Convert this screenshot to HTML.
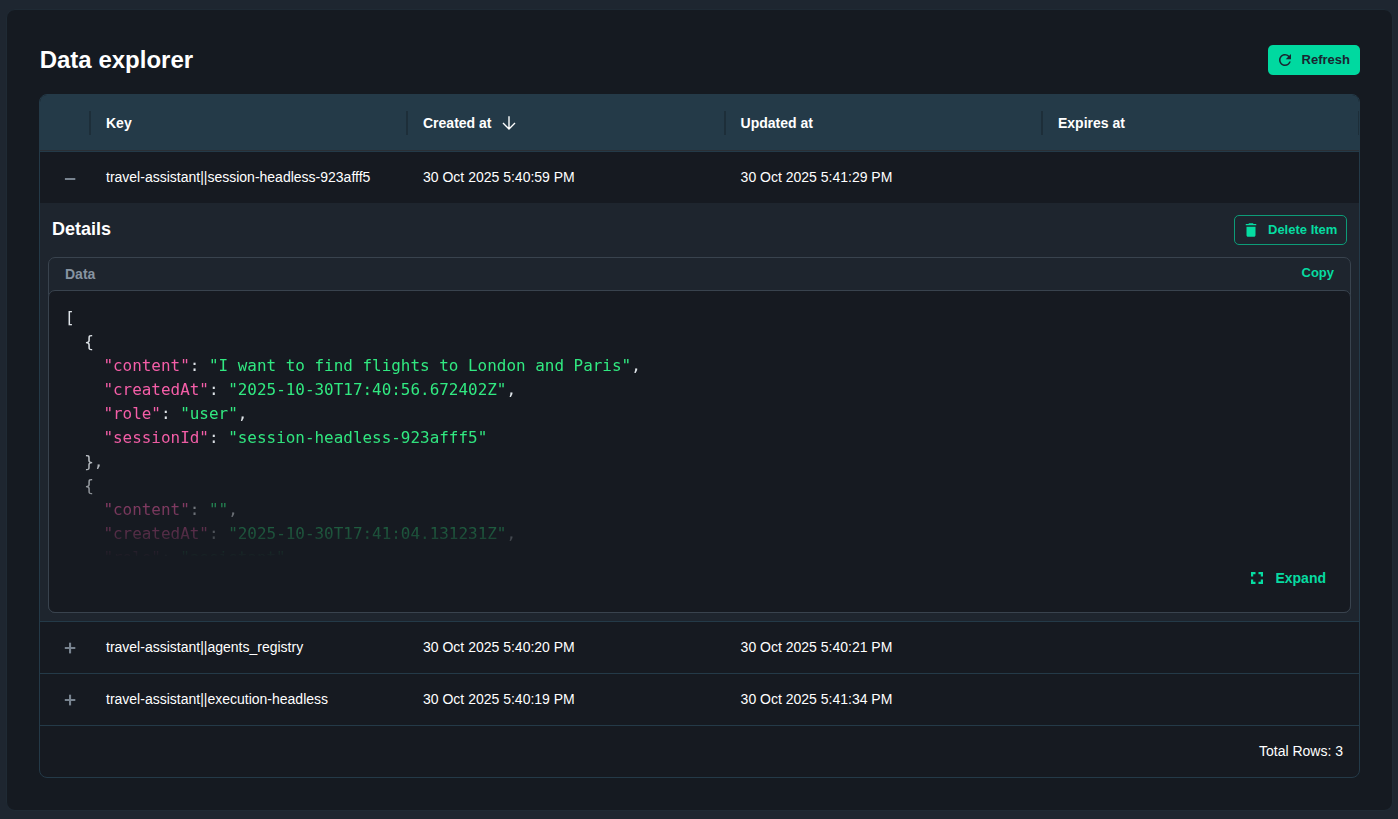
<!DOCTYPE html>
<html><head><meta charset="utf-8">
<style>
*{box-sizing:border-box;margin:0;padding:0}
html,body{width:1398px;height:819px;overflow:hidden;background:#1e2630;font-family:"Liberation Sans",Arial,sans-serif;color:#fff}
.panel{position:absolute;left:6px;top:9px;width:1387px;height:802px;background:#151a21;border:1px solid #1f2a34;border-radius:9px}
h1{position:absolute;left:39.7px;top:45px;font-size:24px;line-height:30px;font-weight:700;color:#fff;letter-spacing:0}
.refresh{position:absolute;left:1268px;top:45px;width:92px;height:30px;border-radius:5px;background:#00d9a0;color:#1a2530;font-weight:700;font-size:13px;line-height:30px}
.refresh svg{position:absolute;left:8px;top:6px}
.refresh span{position:absolute;left:33.6px;top:0}
.table{position:absolute;left:39px;top:94px;width:1321px;height:684px;border:1px solid #243a48;border-radius:8px;overflow:hidden;background:#161a21}
.thead{position:absolute;left:0;top:0;width:100%;height:55px;background:#243a48}
.hline{position:absolute;left:0;width:100%;height:1px;background:#243a48}
.sep{position:absolute;top:16px;width:2px;height:24px;background:#1d2e39}
.th{position:absolute;top:0;line-height:56px;font-size:14px;font-weight:700;color:#fff}
.row{position:absolute;left:0;width:100%;height:52px}
.td{position:absolute;top:-1px;line-height:52px;font-size:14px;color:#fff}
.ico{position:absolute;left:24px;top:20px}
.details{position:absolute;left:0;top:108px;width:100%;height:419px;background:#1e252e}
.details h2{position:absolute;left:12px;top:15px;font-size:18px;line-height:22px;font-weight:700}
.del{position:absolute;left:1194px;top:12px;width:113px;height:30px;border:1px solid #0d9c78;border-radius:5px;color:#06dca1;font-weight:700;font-size:13px;line-height:28px}
.del svg{position:absolute;left:6.8px;top:4.6px}
.del span{position:absolute;left:33px;top:0}
.data{position:absolute;left:8px;top:54px;width:1303px;height:356px;border:1px solid #39434e;border-radius:7px;background:#1e252e}
.data .lbl{position:absolute;left:16px;top:7px;font-size:14px;line-height:18px;font-weight:700;color:#8794a1}
.data .copy{position:absolute;right:16px;top:6px;font-size:13px;line-height:18px;font-weight:700;color:#06dca1}
.code{position:absolute;left:-1px;top:32px;width:1303px;height:323px;border:1px solid #39434e;border-radius:7px;background:#161a21;overflow:hidden}
pre{position:absolute;left:16px;top:15px;height:250px;width:1260px;overflow:hidden;font-family:"DejaVu Sans Mono","Liberation Mono",monospace;font-size:15.95px;line-height:24px;color:#dfe4e9;-webkit-mask-image:linear-gradient(to bottom,#000 0,#000 130px,rgba(0,0,0,.27) 228px,transparent 252px);mask-image:linear-gradient(to bottom,#000 0,#000 130px,rgba(0,0,0,.27) 228px,transparent 252px)}
.k{color:#f55ea8}.s{color:#31e981}
.expand{position:absolute;right:24px;top:277px;font-size:14px;line-height:20px;font-weight:700;color:#06dca1}
.expand svg{position:absolute;left:-25.1px;top:5px}
.foot{position:absolute;right:16px;top:630px;line-height:52px;font-size:14px;color:#fff}
</style></head><body>
<div class="panel"></div>
<h1>Data explorer</h1>
<div class="refresh"><svg width="18" height="18" viewBox="0 0 24 24" fill="#1a2530"><path d="M17.65 6.35A7.958 7.958 0 0 0 12 4c-4.42 0-7.99 3.58-7.99 8s3.57 8 7.99 8c3.73 0 6.84-2.55 7.73-6h-2.08A5.99 5.99 0 0 1 12 18c-3.31 0-6-2.69-6-6s2.69-6 6-6c1.66 0 3.14.69 4.22 1.78L13 11h7V4l-2.35 2.35z"/></svg><span>Refresh</span></div>
<div class="table">
 <div class="thead">
  <div class="sep" style="left:49px"></div><div class="th" style="left:66px">Key</div>
  <div class="sep" style="left:366px"></div><div class="th" style="left:383px">Created at</div>
  <svg style="position:absolute;left:461px;top:19.7px" width="16" height="16" viewBox="0 0 16 16" fill="none" stroke="#fff" stroke-width="1.4"><path d="M8 1.3v12.7M2 8l6 6 6-6"/></svg>
  <div class="sep" style="left:684px"></div><div class="th" style="left:700.6px">Updated at</div>
  <div class="sep" style="left:1001px"></div><div class="th" style="left:1018px">Expires at</div>
  <div class="sep" style="left:1318px;width:1px"></div>
 </div>
 <div class="hline" style="top:55px;background:#2a2f35"></div><div class="hline" style="top:56px"></div>
 <div class="row" style="top:57px">
  <svg class="ico" width="12" height="12" viewBox="0 0 12 12" fill="#78838f"><rect x="0.9" y="6" width="10.4" height="2"/></svg>
  <div class="td" style="left:66px">travel-assistant||session-headless-923afff5</div>
  <div class="td" style="left:383px">30 Oct 2025 5:40:59 PM</div>
  <div class="td" style="left:700.6px">30 Oct 2025 5:41:29 PM</div>
 </div>
 <div class="details">
  <h2>Details</h2>
  <div class="del"><svg width="18" height="18" viewBox="0 0 24 24" fill="#06dca1"><path d="M6 19c0 1.1.9 2 2 2h8c1.1 0 2-.9 2-2V7.5H6V19zM19 4h-3.5l-1-1h-5l-1 1H5v1.8h14V4z"/></svg><span>Delete Item</span></div>
  <div class="data">
   <div class="lbl">Data</div><div class="copy">Copy</div>
   <div class="code">
<pre>[
  {
    <span class="k">"content"</span>: <span class="s">"I want to find flights to London and Paris"</span>,
    <span class="k">"createdAt"</span>: <span class="s">"2025-10-30T17:40:56.672402Z"</span>,
    <span class="k">"role"</span>: <span class="s">"user"</span>,
    <span class="k">"sessionId"</span>: <span class="s">"session-headless-923afff5"</span>
  },
  {
    <span class="k">"content"</span>: <span class="s">""</span>,
    <span class="k">"createdAt"</span>: <span class="s">"2025-10-30T17:41:04.131231Z"</span>,
    <span class="k">"role"</span>: <span class="s">"assistant"</span>,
    <span class="k">"sessionId"</span>: <span class="s">"session-headless-923afff5"</span>,</pre>
    <svg style="position:absolute;left:1202px;top:281px" width="12" height="12" viewBox="0 0 12 12" fill="#06dca1"><path d="M0 0h4.5v2.2H2.2v2.3H0zM7.5 0H12v4.5H9.8V2.2H7.5zM0 7.5h2.2v2.3h2.3V12H0zM9.8 7.5H12V12H7.5V9.8h2.3z"/></svg><div class="expand">Expand</div>
   </div>
  </div>
 </div>
 <div class="hline" style="top:526px"></div>
 <div class="row" style="top:527px">
  <svg class="ico" width="12" height="12" viewBox="0 0 12 12" fill="#78838f"><rect x="0.8" y="5" width="10.5" height="2"/><rect x="5" y="0.7" width="2.1" height="10.7"/></svg>
  <div class="td" style="left:66px">travel-assistant||agents_registry</div>
  <div class="td" style="left:383px">30 Oct 2025 5:40:20 PM</div>
  <div class="td" style="left:700.6px">30 Oct 2025 5:40:21 PM</div>
 </div>
 <div class="hline" style="top:578px"></div>
 <div class="row" style="top:579px">
  <svg class="ico" width="12" height="12" viewBox="0 0 12 12" fill="#78838f"><rect x="0.8" y="5" width="10.5" height="2"/><rect x="5" y="0.7" width="2.1" height="10.7"/></svg>
  <div class="td" style="left:66px">travel-assistant||execution-headless</div>
  <div class="td" style="left:383px">30 Oct 2025 5:40:19 PM</div>
  <div class="td" style="left:700.6px">30 Oct 2025 5:41:34 PM</div>
 </div>
 <div class="hline" style="top:630px"></div>
 <div class="foot">Total Rows: 3</div>
</div>
</body></html>
